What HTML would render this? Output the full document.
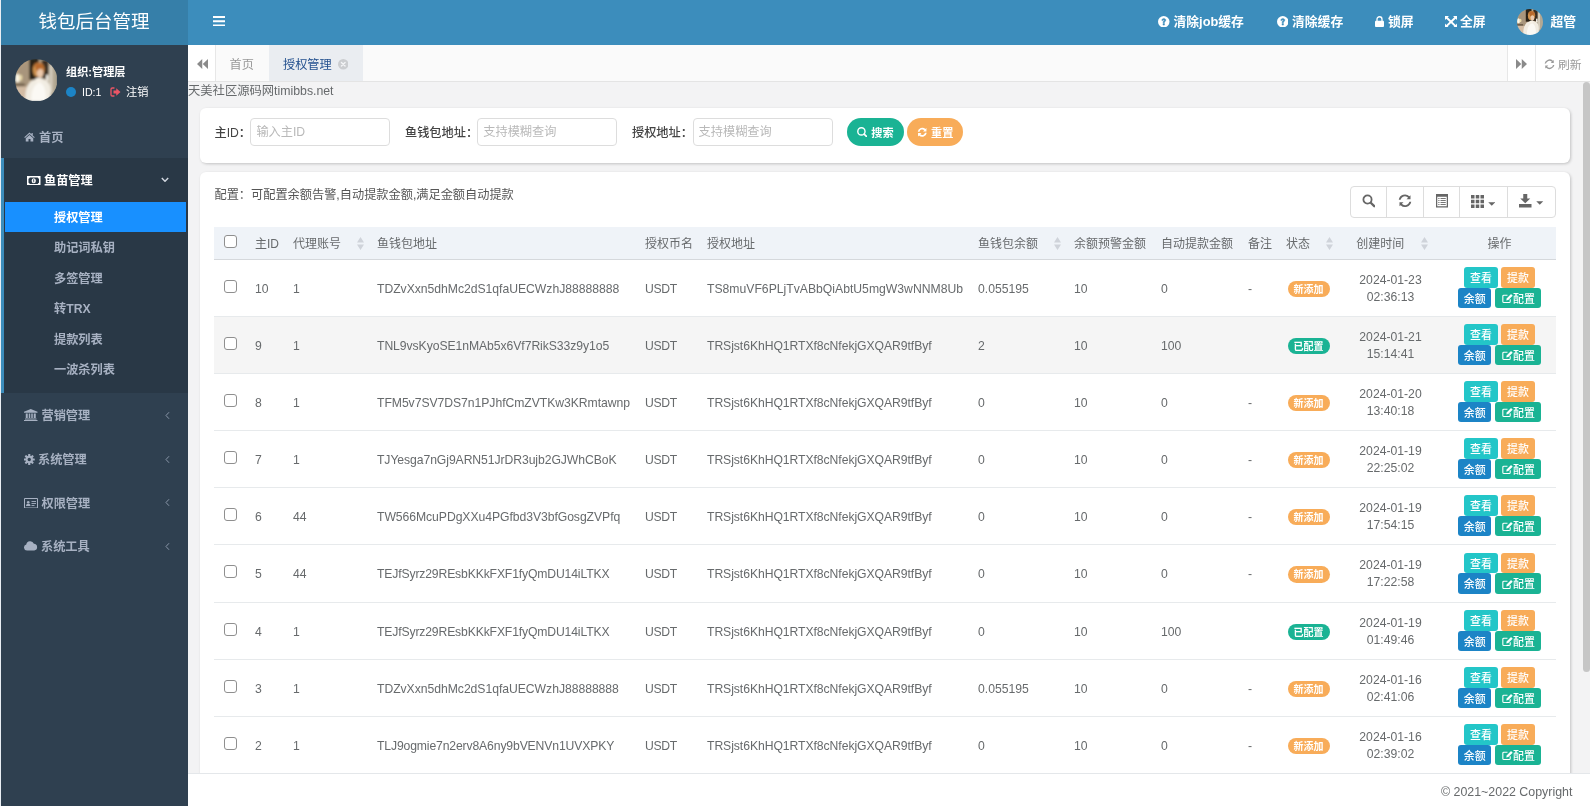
<!DOCTYPE html>
<html lang="zh-CN">
<head>
<meta charset="utf-8">
<title>钱包后台管理</title>
<style>
*{box-sizing:border-box;margin:0;padding:0}
html,body{width:1590px;height:806px;overflow:hidden}
body{will-change:transform}
body{font-family:"Liberation Sans","Noto Sans CJK SC",sans-serif;font-size:12.2px;color:#676a6c;background:#f3f3f4;position:relative}
.abs{position:absolute}
/* ---------- header ---------- */
#logo{left:0;top:0;width:188px;height:45px;background:#367fa9;color:#fff;font-size:18.5px;line-height:44px;text-align:center;font-weight:400}
#edge{left:0;top:0;width:1px;height:806px;background:#e9eef3;z-index:20}
#topbar{left:188px;top:0;width:1402px;height:45px;background:#3c8dbc}
.tb{position:absolute;top:0;height:44px;line-height:43px;color:#fff;font-size:12.8px;font-weight:700;white-space:nowrap}
/* ---------- sidebar ---------- */
#side{left:0;top:44px;width:188px;height:762px;background:#2f4050}
#sideact{left:0;top:158px;width:188px;height:235px;background:#293846}
#sidebar-l{left:1px;top:158px;width:3px;height:235px;background:#3c8dbc}
.m1{position:absolute;left:24px;color:#a7b1c2;font-size:12.2px;font-weight:700;white-space:nowrap;line-height:16px}
.m2{position:absolute;left:54px;color:#a7b1c2;font-size:12.2px;font-weight:700;white-space:nowrap;line-height:16px}
.arr{position:absolute}
/* ---------- tabs ---------- */
#tabs{left:188px;top:45px;width:1402px;height:37px;background:#fafafa;border-bottom:1px solid #e4e4e4}
/* ---------- panels ---------- */
.panel{background:#fff;border-radius:6px;box-shadow:1px 1px 3px rgba(0,0,0,.2)}
#search{left:200px;top:108px;width:1370px;height:55px}
#tpanel{left:200px;top:172px;width:1370px;height:640px}
.lbl{position:absolute;top:0;line-height:50px;color:#444;font-weight:500;white-space:nowrap}
.inp{position:absolute;top:10px;height:28px;width:140px;border:1px solid #ddd;border-radius:4px;background:#fff;color:#b9b9b9;line-height:27.500px;padding-left:5px;white-space:nowrap}

.sbtn{position:absolute;top:10px;height:28px;width:56.500px;border-radius:14px;color:#fff;font-size:11.200px;font-weight:700;display:flex;align-items:center;justify-content:center;white-space:nowrap}
.sbtn svg{margin-right:3.800px}

/* ---------- table ---------- */
#tools{left:1150px;top:14px;width:206px;height:32px;border:1px solid #ddd;border-radius:4px;background:#fff}
#tools i{position:absolute;top:0;height:30px;padding-bottom:2px;border-right:1px solid #ddd;display:flex;align-items:center;justify-content:center}
#tb{position:absolute;left:14px;top:56px;width:1342px;border-collapse:collapse;table-layout:fixed;font-size:12.200px}
#tb th{height:31px;background:#eff3f8;font-weight:400;text-align:left;padding:1.500px 8px 0;color:#676a6c;position:relative;white-space:nowrap;border-bottom:1.500px solid #d5d8dc;line-height:16px;font-size:12px}
#tb td{height:57px;padding:3.500px 8px 0;white-space:nowrap;border-bottom:1px solid #e7eaec;line-height:17px;vertical-align:middle}
#tb .c{text-align:center}
#tb tr.hv td{background:#f5f5f5}
#tb .ck{padding:0;text-align:center}
#tb td.dt{padding-top:2.300px}
#tb td.st{padding-top:2px}
#tb td.op{padding-top:.600px}
#tb td .cb{top:-1.600px;left:.400px}
#tb th .cb{top:-2.200px;left:.400px}
.cb{display:inline-block;width:13px;height:13px;border:1px solid #8f8f8f;border-radius:3px;background:#fff;vertical-align:middle;position:relative;top:-2px}
.srt{position:absolute;top:8.500px}
.bdg{display:inline-block;width:42px;height:16.500px;line-height:18px;overflow:hidden;vertical-align:middle;border-radius:9px;color:#fff;font-size:10px;font-weight:700;text-align:center;margin-left:1.500px}
.ab{display:inline-block;height:20.500px;line-height:23px;padding:0 5.800px;border-radius:3px;color:#fff;font-size:10.900px;font-weight:500;margin:0 1.800px;vertical-align:top}
.ab svg{vertical-align:-1px;margin-right:0}
#tb td.op{line-height:20.500px;font-size:0}
.ab.b2{margin:0 2px}
#tb tr.r58 td{height:58px}
/* ---------- footer ---------- */
#foot{left:188px;top:773px;width:1402px;height:33px;background:#fff;border-top:1px solid #e4e7ea;line-height:37px;text-align:right;padding-right:17.600px;color:#676a6c;font-size:12.400px}
#sbar{left:1583px;top:82px;width:7px;height:691px;background:#f3f3f4}
#sthumb{left:1583px;top:82.200px;width:7px;height:589.500px;background:#c6c6c6;border-radius:3.500px}
</style>
</head>
<body>
<div class="abs" id="side"></div>
<div class="abs" id="sideact"></div>
<div class="abs" id="sidebar-l"></div>

<!-- sidebar user -->
<svg width="0" height="0" style="position:absolute"><defs><filter id="blr" x="-5%" y="-5%" width="110%" height="110%"><feGaussianBlur stdDeviation="0.950"/></filter><clipPath id="c1"><circle cx="21.500" cy="21.500" r="21.500"/></clipPath><g id="avaimg"><g clip-path="url(#c1)"><g filter="url(#blr)">
    <rect width="43" height="43" fill="#b5a287"/>
    <rect x="0" y="0" width="14" height="43" fill="#b09a7c"/>
    <path d="M4 10L14 2V30L3 30Z" fill="#a8957c"/>
    <rect x="33" y="0" width="10" height="43" fill="#b3a893"/>
    <rect x="35" y="6" width="3" height="28" fill="#d6cebe"/>
    <rect x="14.500" y="0" width="9.500" height="21" fill="#2b2117"/>
    <rect x="27" y="1" width="7" height="19" fill="#3a2f22"/>
    <rect x="31.500" y="16" width="2.500" height="6" fill="#f4f1ea"/>
    <ellipse cx="2.500" cy="19.500" rx="2.600" ry="4.200" fill="#fbf6e6"/>
    <ellipse cx="5.800" cy="19" rx="1.600" ry="3" fill="#e9d9a8"/>
    <rect x="0" y="25" width="10" height="2.500" fill="#6b5a45"/>
    <path d="M0 28H14V43H0Z" fill="#d3bca4"/>
    <ellipse cx="24" cy="10.500" rx="6" ry="7.200" fill="#c17d3c"/>
    <ellipse cx="22" cy="12" rx="3.600" ry="6" fill="#cf9350"/>
    <ellipse cx="25.500" cy="14.500" rx="3.300" ry="4.300" fill="#ecc9ac"/>
    <path d="M20 6C23 3 28 4 29.500 9C27 8.500 24 9.500 22.500 12.500C21.500 11 20.500 8.500 20 6Z" fill="#b8692d"/>
    <path d="M10.500 43C10 32 12.500 22 21 20.500C24 19 28 19.500 30 21C36.500 22.500 37 32 35.500 43Z" fill="#f1ece2"/>
    <path d="M16.500 43C16 33 19 25.500 25 23.500C30 25 32 34 31 43Z" fill="#fbf9f4"/>
    <ellipse cx="23.500" cy="21.500" rx="3" ry="2.500" fill="#f7f1e6"/>
  </g></g></g></defs></svg>
<svg class="abs" id="ava1" style="left:14.700px;top:58.600px" width="42.400" height="42.400" viewBox="0 0 43 43"><use href="#avaimg"/></svg>
<div class="abs" style="left:66px;top:63.500px;color:#fff;font-size:11.150px;font-weight:700;line-height:16px;white-space:nowrap">组织:管理层</div>
<div class="abs" style="left:66px;top:87px;width:10px;height:10px;border-radius:50%;background:#1c84c6"></div>
<div class="abs" style="left:82px;top:84.200px;color:#fff;font-size:10.600px;line-height:16px;white-space:nowrap">ID:1</div>
<svg class="abs" style="left:110px;top:87px" width="11" height="10" viewBox="0 0 22 20"><path d="M8 2H4.5A2.5 2.5 0 0 0 2 4.500V15.500A2.500 2.500 0 0 0 4.500 18H8" fill="none" stroke="#ed5565" stroke-width="2.600" stroke-linecap="round"/><path d="M7 7.200H12.500V2.500L21 10L12.500 17.500V12.800H7Z" fill="#ed5565"/></svg>
<div class="abs" style="left:126px;top:84px;color:#fff;font-size:11.2px;line-height:16px;white-space:nowrap">注销</div>

<!-- level 1 -->
<svg class="abs" style="left:24px;top:131.500px" width="11" height="10" viewBox="0 0 22 20"><path d="M11 1L0.500 10.500L2 12L11 4L20 12L21.500 10.500L17.500 6.800V2H15V4.600Z M11 5.800L3.500 12.500V19H9V14H13V19H18.500V12.500Z" fill="#a7b1c2"/></svg>
<div class="m1" style="left:39px;top:129.500px">首页</div>

<svg class="abs" style="left:27px;top:175.500px" width="13.500" height="9.500" viewBox="0 0 27 19"><path d="M0 0H27V19H0Z M3 5.500V13.500A3 3 0 0 1 5.500 16H21.500A3 3 0 0 1 24 13.500V5.500A3 3 0 0 1 21.500 3H5.500A3 3 0 0 1 3 5.500Z" fill="#fff" fill-rule="evenodd"/><ellipse cx="13.500" cy="9.500" rx="4.200" ry="5" fill="#fff"/><path d="M12 7.500L13.500 6.500H14.300V12.500H12.800V8.300L12 8.700Z" fill="#293846"/></svg>
<div class="m1" style="left:44px;top:173px;color:#fff">鱼苗管理</div>
<svg class="arr" style="left:161.200px;top:176.700px" width="8" height="5.400" viewBox="0 0 15 10"><path d="M1.500 1.800L7.500 8L13.500 1.800" fill="none" stroke="#d3d9e2" stroke-width="2.600"/></svg>

<div class="abs" style="left:5px;top:202px;width:181px;height:30px;background:#1890ff"></div>
<div class="m2" style="top:210px;color:#fff">授权管理</div>
<div class="m2" style="top:240px">助记词私钥</div>
<div class="m2" style="top:270.500px">多签管理</div>
<div class="m2" style="top:301px">转TRX</div>
<div class="m2" style="top:331.500px">提款列表</div>
<div class="m2" style="top:362px">一波杀列表</div>

<svg class="abs" style="left:24px;top:409px" width="13.500" height="12" viewBox="0 0 27 24"><path d="M13.500 0L27 5.500V7.500H0V5.500Z M3.500 9H7.500V18H3.500Z M9.500 9H12.500V18H9.500Z M14.500 9H17.500V18H14.500Z M19.500 9H23.500V18H19.500Z M2 19H25V21H2Z M0 22H27V24H0Z" fill="#a7b1c2"/></svg>
<div class="m1" style="left:41.500px;top:408px">营销管理</div>
<svg class="arr" style="left:164.800px;top:410.700px" width="5" height="9" viewBox="0 0 10 16"><path d="M8 1.500L2 8L8 14.500" fill="none" stroke="#8996a8" stroke-width="2"/></svg>

<svg class="abs" style="left:24px;top:453.500px" width="10.500" height="11" viewBox="0 0 21 22"><g fill="#a7b1c2"><circle cx="10.500" cy="11" r="7.300"/><g id="teeth"><rect x="8.300" y="0" width="4.400" height="22" rx="1"/><rect x="8.300" y="0" width="4.400" height="22" rx="1" transform="rotate(45 10.500 11)"/><rect x="8.300" y="0" width="4.400" height="22" rx="1" transform="rotate(90 10.500 11)"/><rect x="8.300" y="0" width="4.400" height="22" rx="1" transform="rotate(135 10.500 11)"/></g></g><circle cx="10.500" cy="11" r="3.300" fill="#2f4050"/></svg>
<div class="m1" style="left:38px;top:452px">系统管理</div>
<svg class="arr" style="left:164.800px;top:454.700px" width="5" height="9" viewBox="0 0 10 16"><path d="M8 1.500L2 8L8 14.500" fill="none" stroke="#8996a8" stroke-width="2"/></svg>

<svg class="abs" style="left:24px;top:497.500px" width="14" height="10.500" viewBox="0 0 28 21"><path d="M2 0H26A2 2 0 0 1 28 2V19A2 2 0 0 1 26 21H2A2 2 0 0 1 0 19V2A2 2 0 0 1 2 0Z M2 2V19H26V2Z" fill="#a7b1c2" fill-rule="evenodd"/><circle cx="8.500" cy="8.500" r="2.600" fill="#a7b1c2"/><path d="M4 16C4 12.500 6 11.500 8.500 11.500S13 12.500 13 16Z" fill="#a7b1c2"/><rect x="15" y="6" width="9" height="1.800" fill="#a7b1c2"/><rect x="15" y="10" width="9" height="1.800" fill="#a7b1c2"/><rect x="15" y="14" width="6" height="1.800" fill="#a7b1c2"/></svg>
<div class="m1" style="left:41.500px;top:495.500px">权限管理</div>
<svg class="arr" style="left:164.800px;top:498.200px" width="5" height="9" viewBox="0 0 10 16"><path d="M8 1.500L2 8L8 14.500" fill="none" stroke="#8996a8" stroke-width="2"/></svg>

<svg class="abs" style="left:24px;top:541px" width="13.500" height="9.500" viewBox="0 0 27 19"><path d="M6 19A6 6 0 0 1 4.500 7.200A8 8 0 0 1 19.800 5.500A6.800 6.800 0 0 1 20.500 19Z" fill="#a7b1c2"/></svg>
<div class="m1" style="left:41px;top:539px">系统工具</div>
<svg class="arr" style="left:164.800px;top:541.700px" width="5" height="9" viewBox="0 0 10 16"><path d="M8 1.500L2 8L8 14.500" fill="none" stroke="#8996a8" stroke-width="2"/></svg>
<div class="abs" id="logo">钱包后台管理</div>
<div class="abs" id="topbar"></div>

<!-- top bar -->
<svg class="abs" style="left:212.500px;top:15.500px" width="12.500" height="10.500" viewBox="0 0 25 21"><path d="M0 0H25V4.200H0Z M0 8.400H25V12.600H0Z M0 16.800H25V21H0Z" fill="#fff"/></svg>
<svg class="abs qi" style="left:1158px;top:15.500px" width="11.500" height="11.500" viewBox="0 0 24 24"><circle cx="12" cy="12" r="12" fill="#fff"/><path d="M8 9.200C8 6.500 9.800 5 12.200 5C14.600 5 16.300 6.500 16.300 8.600C16.300 10.300 15.400 11.100 14.400 11.900C13.700 12.400 13.500 12.800 13.500 13.800V14.300H10.500V13.500C10.500 11.900 11.100 11.200 12 10.500C12.700 10 13.100 9.600 13.100 8.900C13.100 8.200 12.700 7.800 12 7.800C11.300 7.800 10.900 8.300 10.900 9.200Z M10.400 15.800H13.600V19H10.400Z" fill="#3c8dbc" stroke="#3c8dbc" stroke-width=".900"/></svg>
<div class="tb" style="left:1173.500px">清除job缓存</div>
<svg class="abs qi" style="left:1276.500px;top:15.500px" width="11.500" height="11.500" viewBox="0 0 24 24"><circle cx="12" cy="12" r="12" fill="#fff"/><path d="M8 9.200C8 6.500 9.800 5 12.200 5C14.600 5 16.300 6.500 16.300 8.600C16.300 10.300 15.400 11.100 14.400 11.900C13.700 12.400 13.500 12.800 13.500 13.800V14.300H10.500V13.500C10.500 11.900 11.100 11.200 12 10.500C12.700 10 13.100 9.600 13.100 8.900C13.100 8.200 12.700 7.800 12 7.800C11.300 7.800 10.900 8.300 10.900 9.200Z M10.400 15.800H13.600V19H10.400Z" fill="#3c8dbc" stroke="#3c8dbc" stroke-width=".900"/></svg>
<div class="tb" style="left:1292px">清除缓存</div>
<svg class="abs" style="left:1375px;top:15.500px" width="9" height="11" viewBox="0 0 18 22"><path d="M4 10V6.500A5 5 0 0 1 14 6.500V10" fill="none" stroke="#fff" stroke-width="2.600"/><rect x="0" y="9.500" width="18" height="12.500" rx="1.800" fill="#fff"/></svg>
<div class="tb" style="left:1388px">锁屏</div>
<svg class="abs" style="left:1444.500px;top:15.500px" width="12" height="11.500" viewBox="0 0 24 23"><g fill="#fff"><path d="M0 0H8L5.400 2.600L21.400 18L24 15V23H16L18.600 20.400L2.600 5.400L0 8Z"/><path d="M24 0V8L21.400 5.400L5.400 20.400L8 23H0V15L2.600 18L18.600 2.600L16 0Z"/></g></svg>
<div class="tb" style="left:1460px">全屏</div>
<svg class="abs" style="left:1517px;top:8.500px" width="26" height="26" viewBox="0 0 43 43"><use href="#avaimg"/></svg>
<div class="tb" style="left:1550.500px">超管</div>

<div class="abs" id="tabs">
  <div class="abs" style="left:0;top:0;width:28px;height:36px;background:#fff;border-right:1px solid #e7e7e7"></div>
  <svg class="abs" style="left:8.500px;top:14px" width="11" height="10" viewBox="0 0 22 20"><path d="M10.500 0V20L0 10Z M22 0V20L11.500 10Z" fill="#8a8a8a"/></svg>
  <div class="abs" style="left:27px;top:0;width:53.500px;height:36px;line-height:40px;text-align:center;color:#999;font-size:12.200px">首页</div>
  <div class="abs" style="left:80.500px;top:0;width:94.500px;height:36px;background:#eaedf1"></div>
  <div class="abs" style="left:95px;top:0;height:36px;line-height:40px;color:#23508e;font-size:12.200px;white-space:nowrap">授权管理</div>
  <svg class="abs" style="left:149.500px;top:14px" width="10.500" height="10.500" viewBox="0 0 20 20"><circle cx="10" cy="10" r="10" fill="#cbcdd0"/><path d="M6.500 6.500L13.500 13.500M13.500 6.500L6.500 13.500" stroke="#f4f5f7" stroke-width="2.600" stroke-linecap="round"/></svg>
  <div class="abs" style="left:1319px;top:0;width:29px;height:36px;background:#fff;border-left:1px solid #e7e7e7"></div>
  <div class="abs" style="left:1347px;top:0;width:55px;height:36px;background:#fff;border-left:1px solid #e7e7e7"></div>
  <svg class="abs" style="left:1327.500px;top:14px" width="11" height="10" viewBox="0 0 22 20"><path d="M0 0V20L10.500 10Z M11.500 0V20L22 10Z" fill="#8a8a8a"/></svg>
  <svg class="abs" style="left:1356px;top:14px" width="11" height="10.500" viewBox="0 0 22 21"><path d="M19.500 2V8H13.500L15.800 5.700A7 7 0 0 0 4 9H1.200A9.800 9.800 0 0 1 17.800 3.700Z M2.500 19V13H8.500L6.200 15.300A7 7 0 0 0 18 12H20.800A9.800 9.800 0 0 1 4.200 17.300Z" fill="#999"/></svg>
  <div class="abs" style="left:1370px;top:0;height:36px;line-height:40px;color:#999;font-size:11.800px;white-space:nowrap">刷新</div>
</div>
<div class="abs" style="left:188px;top:83.300px;line-height:16px;font-size:12.300px;color:#676a6c;white-space:nowrap">天美社区源码网timibbs.net</div>


<div class="abs panel" id="search">
  <div class="lbl" style="left:14.500px">主ID：</div>
  <div class="inp" style="left:50.400px">输入主ID</div>
  <div class="lbl" style="left:205px">鱼钱包地址：</div>
  <div class="inp" style="left:277.300px">支持模糊查询</div>
  <div class="lbl" style="left:432px">授权地址：</div>
  <div class="inp" style="left:492.600px">支持模糊查询</div>
  <div class="sbtn" style="left:647px;background:#1ab394"><svg width="10.500" height="10.500" viewBox="0 0 20 20"><circle cx="8.400" cy="8.400" r="6.900" fill="none" stroke="#fff" stroke-width="2.700"/><path d="M13.600 13.600L18.600 18.600" stroke="#fff" stroke-width="3.200" stroke-linecap="round"/></svg><span>搜索</span></div>
  <div class="sbtn" style="left:707px;width:56px;background:#f8ac59"><svg width="10.500" height="10.500" viewBox="0 0 22 21"><path d="M1.550 9.500A9.500 9.500 0 0 1 17.700 3.800L19.800 1.700V8.800H12.700L15.100 6.400A5.800 5.800 0 0 0 5.290 9.500Z M20.450 11.500A9.500 9.500 0 0 1 4.300 17.200L2.200 19.300V12.200H9.300L6.900 14.600A5.800 5.800 0 0 0 16.710 11.500Z" fill="#fff"/></svg><span>重置</span></div>
</div>

<!--TPANEL--><div class="abs panel" id="tpanel">
<div class="abs" style="left:14.500px;top:14px;line-height:18px;white-space:nowrap;color:#555">配置：可配置余额告警,自动提款金额,满足金额自动提款</div>
<div class="abs" id="tools">
<i style="left:0;width:35.800px"><svg width="13.500" height="13.500" viewBox="0 0 27 27"><circle cx="11" cy="11" r="8.200" fill="none" stroke="#666" stroke-width="3.600"/><path d="M17.500 17.500L24.500 24.500" stroke="#666" stroke-width="4.600" stroke-linecap="round"/></svg></i>
<i style="left:35.800px;width:37px"><svg width="14" height="13.500" viewBox="0 0 28 27"><path d="M25 2.500V10.500H17L20.200 7.300A9 9 0 0 0 5.200 11.500H1.500A12.600 12.600 0 0 1 22.800 4.700Z M3 24.500V16.500H11L7.800 19.700A9 9 0 0 0 22.800 15.500H26.500A12.600 12.600 0 0 1 5.200 22.300Z" fill="#666"/></svg></i>
<i style="left:72.800px;width:35.800px"><svg style="margin-left:1.500px" width="12" height="13.500" viewBox="0 0 24 27"><path d="M0 0H24V27H0Z M2.500 5.500V24.500H21.500V5.500Z" fill="#666" fill-rule="evenodd"/><path d="M4.500 8H7V10H4.500Z M9 8H19.500V10H9Z M4.500 12H7V14H4.500Z M9 12H19.500V14H9Z M4.500 16H7V18H4.500Z M9 16H19.500V18H9Z M4.500 20H7V22H4.500Z M9 20H19.500V22H9Z" fill="#777"/></svg></i>
<i style="left:108.600px;width:48.300px"><svg width="24.500" height="13" viewBox="0 0 49 26"><path d="M0 0H7V7H0Z M9.500 0H16.500V7H9.500Z M19 0H26V7H19Z M0 9.500H7V16.500H0Z M9.500 9.500H16.500V16.500H9.500Z M19 9.500H26V16.500H19Z M0 19H7V26H0Z M9.500 19H16.500V26H9.500Z M19 19H26V26H19Z" fill="#666"/><path d="M34.500 14.500H48.500L41.500 21.500Z" fill="#666"/></svg></i>
<i style="left:156.900px;width:47.100px;border-right:0"><svg width="24.500" height="13.500" viewBox="0 0 49 27"><path d="M8.500 0H16.500V9H22.500L12.500 18.500L2.500 9H8.500Z M0 20H25V27H0Z" fill="#666"/><path d="M34.500 14.500H48.500L41.500 21.500Z" fill="#666"/></svg></i>
</div>
<div class="abs" style="left:14px;top:55.300px;width:1342px;height:2px;background:#eff3f8"></div>
<table id="tb"><colgroup><col style="width:33px"><col style="width:38px"><col style="width:84px"><col style="width:268px"><col style="width:62px"><col style="width:271px"><col style="width:96px"><col style="width:87px"><col style="width:87px"><col style="width:38px"><col style="width:60px"><col style="width:105px"><col style="width:113px"></colgroup>
<thead><tr><th class="ck"><span class="cb"></span></th><th>主ID</th><th>代理账号<svg class="srt" style="right:5.500px" width="7" height="13" viewBox="0 0 14 26"><path d="M7 0L14 11H0Z M7 26L14 15H0Z" fill="#cfd3da"/></svg></th><th>鱼钱包地址</th><th>授权币名</th><th>授权地址</th><th>鱼钱包余额<svg class="srt" style="right:5.500px" width="7" height="13" viewBox="0 0 14 26"><path d="M7 0L14 11H0Z M7 26L14 15H0Z" fill="#cfd3da"/></svg></th><th>余额预警金额</th><th>自动提款金额</th><th>备注</th><th>状态<svg class="srt" style="right:5.500px" width="7" height="13" viewBox="0 0 14 26"><path d="M7 0L14 11H0Z M7 26L14 15H0Z" fill="#cfd3da"/></svg></th><th class="c" style="padding-right:28.500px">创建时间<svg class="srt" style="right:15.500px" width="7" height="13" viewBox="0 0 14 26"><path d="M7 0L14 11H0Z M7 26L14 15H0Z" fill="#cfd3da"/></svg></th><th class="c">操作</th></tr></thead><tbody>
<tr><td class="ck"><span class="cb"></span></td><td>10</td><td>1</td><td style="letter-spacing:-0.03px">TDZvXxn5dhMc2dS1qfaUECWzhJ88888888</td><td style="letter-spacing:-.35px">USDT</td><td style="letter-spacing:0px">TS8muVF6PLjTvABbQiAbtU5mgW3wNNM8Ub</td><td>0.055195</td><td>10</td><td>0</td><td>-</td><td class="st"><span class="bdg" style="background:#f8ac59">新添加</span></td><td class="c dt">2024-01-23<br>02:36:13</td><td class="c op"><span class="ab" style="background:#23c6c8">查看</span><span class="ab" style="background:#f8ac59">提款</span><br><span class="ab b2" style="background:#1c84c6">余额</span><span class="ab b2" style="background:#1ab394;padding:0 6.200px"><svg width="11.500" height="10.400" viewBox="0 0 21 19"><path d="M15 11.500V15.500A2 2 0 0 1 13 17.500H3.500A2 2 0 0 1 1.500 15.500V6A2 2 0 0 1 3.500 4H10" fill="none" stroke="#fff" stroke-width="2"/><path d="M8.500 10L16.500 2L19.500 5L11.500 13L7.800 13.700Z" fill="#fff"/></svg>配置</span></td></tr>
<tr class="hv"><td class="ck"><span class="cb"></span></td><td>9</td><td>1</td><td style="letter-spacing:-0.065px">TNL9vsKyoSE1nMAb5x6Vf7RikS33z9y1o5</td><td style="letter-spacing:-.35px">USDT</td><td style="letter-spacing:-0.062px">TRSjst6KhHQ1RTXf8cNfekjGXQAR9tfByf</td><td>2</td><td>10</td><td>100</td><td></td><td class="st"><span class="bdg" style="background:#1ab394">已配置</span></td><td class="c dt">2024-01-21<br>15:14:41</td><td class="c op"><span class="ab" style="background:#23c6c8">查看</span><span class="ab" style="background:#f8ac59">提款</span><br><span class="ab b2" style="background:#1c84c6">余额</span><span class="ab b2" style="background:#1ab394;padding:0 6.200px"><svg width="11.500" height="10.400" viewBox="0 0 21 19"><path d="M15 11.500V15.500A2 2 0 0 1 13 17.500H3.500A2 2 0 0 1 1.500 15.500V6A2 2 0 0 1 3.500 4H10" fill="none" stroke="#fff" stroke-width="2"/><path d="M8.500 10L16.500 2L19.500 5L11.500 13L7.800 13.700Z" fill="#fff"/></svg>配置</span></td></tr>
<tr><td class="ck"><span class="cb"></span></td><td>8</td><td>1</td><td style="letter-spacing:-0.05px">TFM5v7SV7DS7n1PJhfCmZVTKw3KRmtawnp</td><td style="letter-spacing:-.35px">USDT</td><td style="letter-spacing:-0.062px">TRSjst6KhHQ1RTXf8cNfekjGXQAR9tfByf</td><td>0</td><td>10</td><td>0</td><td>-</td><td class="st"><span class="bdg" style="background:#f8ac59">新添加</span></td><td class="c dt">2024-01-20<br>13:40:18</td><td class="c op"><span class="ab" style="background:#23c6c8">查看</span><span class="ab" style="background:#f8ac59">提款</span><br><span class="ab b2" style="background:#1c84c6">余额</span><span class="ab b2" style="background:#1ab394;padding:0 6.200px"><svg width="11.500" height="10.400" viewBox="0 0 21 19"><path d="M15 11.500V15.500A2 2 0 0 1 13 17.500H3.500A2 2 0 0 1 1.500 15.500V6A2 2 0 0 1 3.500 4H10" fill="none" stroke="#fff" stroke-width="2"/><path d="M8.500 10L16.500 2L19.500 5L11.500 13L7.800 13.700Z" fill="#fff"/></svg>配置</span></td></tr>
<tr><td class="ck"><span class="cb"></span></td><td>7</td><td>1</td><td style="letter-spacing:-0.076px">TJYesga7nGj9ARN51JrDR3ujb2GJWhCBoK</td><td style="letter-spacing:-.35px">USDT</td><td style="letter-spacing:-0.062px">TRSjst6KhHQ1RTXf8cNfekjGXQAR9tfByf</td><td>0</td><td>10</td><td>0</td><td>-</td><td class="st"><span class="bdg" style="background:#f8ac59">新添加</span></td><td class="c dt">2024-01-19<br>22:25:02</td><td class="c op"><span class="ab" style="background:#23c6c8">查看</span><span class="ab" style="background:#f8ac59">提款</span><br><span class="ab b2" style="background:#1c84c6">余额</span><span class="ab b2" style="background:#1ab394;padding:0 6.200px"><svg width="11.500" height="10.400" viewBox="0 0 21 19"><path d="M15 11.500V15.500A2 2 0 0 1 13 17.500H3.500A2 2 0 0 1 1.500 15.500V6A2 2 0 0 1 3.500 4H10" fill="none" stroke="#fff" stroke-width="2"/><path d="M8.500 10L16.500 2L19.500 5L11.500 13L7.800 13.700Z" fill="#fff"/></svg>配置</span></td></tr>
<tr><td class="ck"><span class="cb"></span></td><td>6</td><td>44</td><td style="letter-spacing:-0.06px">TW566McuPDgXXu4PGfbd3V3bfGosgZVPfq</td><td style="letter-spacing:-.35px">USDT</td><td style="letter-spacing:-0.062px">TRSjst6KhHQ1RTXf8cNfekjGXQAR9tfByf</td><td>0</td><td>10</td><td>0</td><td>-</td><td class="st"><span class="bdg" style="background:#f8ac59">新添加</span></td><td class="c dt">2024-01-19<br>17:54:15</td><td class="c op"><span class="ab" style="background:#23c6c8">查看</span><span class="ab" style="background:#f8ac59">提款</span><br><span class="ab b2" style="background:#1c84c6">余额</span><span class="ab b2" style="background:#1ab394;padding:0 6.200px"><svg width="11.500" height="10.400" viewBox="0 0 21 19"><path d="M15 11.500V15.500A2 2 0 0 1 13 17.500H3.500A2 2 0 0 1 1.500 15.500V6A2 2 0 0 1 3.500 4H10" fill="none" stroke="#fff" stroke-width="2"/><path d="M8.500 10L16.500 2L19.500 5L11.500 13L7.800 13.700Z" fill="#fff"/></svg>配置</span></td></tr>
<tr class="r58"><td class="ck"><span class="cb"></span></td><td>5</td><td>44</td><td style="letter-spacing:-0.15px">TEJfSyrz29REsbKKkFXF1fyQmDU14iLTKX</td><td style="letter-spacing:-.35px">USDT</td><td style="letter-spacing:-0.062px">TRSjst6KhHQ1RTXf8cNfekjGXQAR9tfByf</td><td>0</td><td>10</td><td>0</td><td>-</td><td class="st"><span class="bdg" style="background:#f8ac59">新添加</span></td><td class="c dt">2024-01-19<br>17:22:58</td><td class="c op"><span class="ab" style="background:#23c6c8">查看</span><span class="ab" style="background:#f8ac59">提款</span><br><span class="ab b2" style="background:#1c84c6">余额</span><span class="ab b2" style="background:#1ab394;padding:0 6.200px"><svg width="11.500" height="10.400" viewBox="0 0 21 19"><path d="M15 11.500V15.500A2 2 0 0 1 13 17.500H3.500A2 2 0 0 1 1.500 15.500V6A2 2 0 0 1 3.500 4H10" fill="none" stroke="#fff" stroke-width="2"/><path d="M8.500 10L16.500 2L19.500 5L11.500 13L7.800 13.700Z" fill="#fff"/></svg>配置</span></td></tr>
<tr><td class="ck"><span class="cb"></span></td><td>4</td><td>1</td><td style="letter-spacing:-0.15px">TEJfSyrz29REsbKKkFXF1fyQmDU14iLTKX</td><td style="letter-spacing:-.35px">USDT</td><td style="letter-spacing:-0.062px">TRSjst6KhHQ1RTXf8cNfekjGXQAR9tfByf</td><td>0</td><td>10</td><td>100</td><td></td><td class="st"><span class="bdg" style="background:#1ab394">已配置</span></td><td class="c dt">2024-01-19<br>01:49:46</td><td class="c op"><span class="ab" style="background:#23c6c8">查看</span><span class="ab" style="background:#f8ac59">提款</span><br><span class="ab b2" style="background:#1c84c6">余额</span><span class="ab b2" style="background:#1ab394;padding:0 6.200px"><svg width="11.500" height="10.400" viewBox="0 0 21 19"><path d="M15 11.500V15.500A2 2 0 0 1 13 17.500H3.500A2 2 0 0 1 1.500 15.500V6A2 2 0 0 1 3.500 4H10" fill="none" stroke="#fff" stroke-width="2"/><path d="M8.500 10L16.500 2L19.500 5L11.500 13L7.800 13.700Z" fill="#fff"/></svg>配置</span></td></tr>
<tr><td class="ck"><span class="cb"></span></td><td>3</td><td>1</td><td style="letter-spacing:-0.04px">TDZvXxn5dhMc2dS1qfaUECWzhJ88888888</td><td style="letter-spacing:-.35px">USDT</td><td style="letter-spacing:-0.062px">TRSjst6KhHQ1RTXf8cNfekjGXQAR9tfByf</td><td>0.055195</td><td>10</td><td>0</td><td>-</td><td class="st"><span class="bdg" style="background:#f8ac59">新添加</span></td><td class="c dt">2024-01-16<br>02:41:06</td><td class="c op"><span class="ab" style="background:#23c6c8">查看</span><span class="ab" style="background:#f8ac59">提款</span><br><span class="ab b2" style="background:#1c84c6">余额</span><span class="ab b2" style="background:#1ab394;padding:0 6.200px"><svg width="11.500" height="10.400" viewBox="0 0 21 19"><path d="M15 11.500V15.500A2 2 0 0 1 13 17.500H3.500A2 2 0 0 1 1.500 15.500V6A2 2 0 0 1 3.500 4H10" fill="none" stroke="#fff" stroke-width="2"/><path d="M8.500 10L16.500 2L19.500 5L11.500 13L7.800 13.700Z" fill="#fff"/></svg>配置</span></td></tr>
<tr><td class="ck"><span class="cb"></span></td><td>2</td><td>1</td><td style="letter-spacing:-0.138px">TLJ9ogmie7n2erv8A6ny9bVENVn1UVXPKY</td><td style="letter-spacing:-.35px">USDT</td><td style="letter-spacing:-0.062px">TRSjst6KhHQ1RTXf8cNfekjGXQAR9tfByf</td><td>0</td><td>10</td><td>0</td><td>-</td><td class="st"><span class="bdg" style="background:#f8ac59">新添加</span></td><td class="c dt">2024-01-16<br>02:39:02</td><td class="c op"><span class="ab" style="background:#23c6c8">查看</span><span class="ab" style="background:#f8ac59">提款</span><br><span class="ab b2" style="background:#1c84c6">余额</span><span class="ab b2" style="background:#1ab394;padding:0 6.200px"><svg width="11.500" height="10.400" viewBox="0 0 21 19"><path d="M15 11.500V15.500A2 2 0 0 1 13 17.500H3.500A2 2 0 0 1 1.500 15.500V6A2 2 0 0 1 3.500 4H10" fill="none" stroke="#fff" stroke-width="2"/><path d="M8.500 10L16.500 2L19.500 5L11.500 13L7.800 13.700Z" fill="#fff"/></svg>配置</span></td></tr>
</tbody></table></div><!--/TPANEL-->
<div class="abs" id="sbar"></div>
<div class="abs" id="sthumb"></div>
<div class="abs" id="foot">© 2021~2022 Copyright</div>
<div class="abs" id="edge"></div>
</body>
</html>
